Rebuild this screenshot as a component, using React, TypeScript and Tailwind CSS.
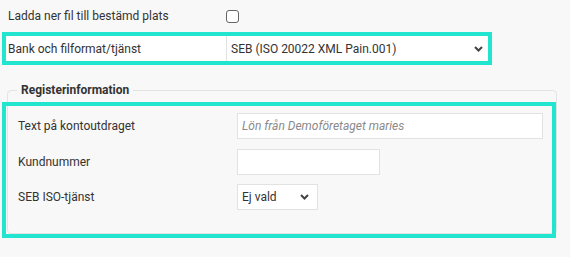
import React from 'react';

function Chevron() {
  return (
    <svg width="9" height="6" viewBox="0 0 9 6" className="shrink-0">
      <path d="M1 1 L4.5 4.5 L8 1" fill="none" stroke="#444" strokeWidth="2" />
    </svg>
  );
}

export default function App() {
  return (
    <div className="w-[570px] h-[257px] bg-[#f8f8f8] text-[12px] text-[#333] font-['Roboto',sans-serif] overflow-hidden">
      {/* Download row */}
      <div className="flex items-center h-[32px] pl-[8px]">
        <span className="w-[218px]">Ladda ner fil till bestämd plats</span>
        <span className="w-[13px] h-[13px] border border-[#666] rounded-[3px] bg-white" />
      </div>

      {/* Bank row (highlighted) */}
      <div className="ml-[2px] w-[490px] h-[33px] border-4 border-[#22e5cf] bg-white flex">
        <div className="w-[220px] pl-[2px] flex items-center">Bank och filformat/tjänst</div>
        <div className="flex-1 border-l border-[#e2e2e2] flex items-center justify-between pl-[4px] pr-[5px]">
          <span>SEB (ISO 20022 XML Pain.001)</span>
          <Chevron />
        </div>
      </div>

      {/* Register info */}
      <fieldset className="ml-[7px] w-[547px] mt-[17px] border border-[#e3e3e3] rounded-[4px]">
        <legend className="ml-[9px] px-[4px] font-bold text-[12px] leading-[16px]">Registerinformation</legend>
        <div className="-ml-[6px] mt-[4px] -mb-[5px] w-[554px] h-[136px] border-4 border-[#22e5cf] pt-[7px] pl-[12px] flex flex-col gap-[10px]">
          <div className="flex items-center">
            <span className="w-[219px]">Text på kontoutdraget</span>
            <div className="w-[306px] h-[26px] bg-white border border-[#e2e2e2] flex items-center pl-[4px] italic text-[#8a8a8a]">
              Lön från Demoföretaget maries
            </div>
          </div>
          <div className="flex items-center">
            <span className="w-[219px]">Kundnummer</span>
            <div className="w-[143px] h-[26px] bg-white border border-[#e2e2e2]" />
          </div>
          <div className="flex items-center -mt-px">
            <span className="w-[219px]">SEB ISO-tjänst</span>
            <div className="w-[81px] h-[26px] bg-white border border-[#e2e2e2] flex items-center justify-between pl-[4px] pr-[8px]">
              <span>Ej vald</span>
              <Chevron />
            </div>
          </div>
        </div>
      </fieldset>
    </div>
  );
}
